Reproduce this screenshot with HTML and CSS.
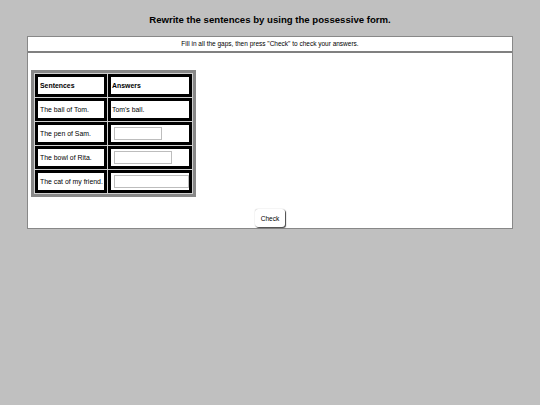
FILE: index.html
```html
<!DOCTYPE html>
<html>
<head>
<meta charset="utf-8">
<link rel="stylesheet" href="styles.css">
</head>
<body>
<div class="title">Rewrite the sentences by using the possessive form.</div>
<div class="box">
  <div class="instr">Fill in all the gaps, then press "Check" to check your answers.</div>
  <div class="content">
    <table class="ex">
      <tr><td class="c1 hd">Sentences</td><td class="c2 hd">Answers</td></tr>
      <tr><td class="c1">The ball of Tom.</td><td class="c2">Tom's ball.</td></tr>
      <tr><td class="c1">The pen of Sam.</td><td class="c2"><input class="gap w1" type="text"></td></tr>
      <tr><td class="c1">The bowl of Rita.</td><td class="c2"><input class="gap w2" type="text"></td></tr>
      <tr><td class="c1">The cat of my friend.</td><td class="c2"><input class="gap w3" type="text"></td></tr>
    </table>
    <div class="btnrow"><button class="check" type="button">Check</button></div>
  </div>
</div>
</body>
</html>
```
FILE: styles.css
```css
html, body {
  margin: 0;
  padding: 0;
  background: #c0c0c0;
  font-family: "Liberation Sans", Arial, sans-serif;
  color: #000;
}
.title {
  font-weight: bold;
  font-size: 9.6px;
  line-height: 12px;
  text-align: center;
  padding-top: 14px;
  height: 22px;
}
.box {
  box-sizing: border-box;
  width: 486px;
  margin: 0 auto;
  background: #fff;
  border: 1px solid #888;
}
.instr {
  font-size: 6.5px;
  line-height: 14px;
  height: 14px;
  text-align: center;
  border-bottom: 2px solid #808080;
}
.content {
  padding: 17px 3px 1px 3px;
}
.ex {
  border: 3px solid #888;
  border-spacing: 1px;
  background: #cfcfcf;
}
.ex td {
  background: #fff;
  border: 3px solid #000;
  height: 17px;
  padding: 0 1px 0 2px;
  font-size: 6.9px;
  white-space: nowrap;
  vertical-align: middle;
  box-sizing: content-box;
}
.ex td.c1 { width: 63px; }
.ex td.c2 { width: 77px; padding-left: 1px; padding-right: 0; }
.ex td.hd { font-weight: bold; font-size: 6.9px; }
.gap {
  display: block;
  box-sizing: border-box;
  height: 13px;
  margin: 0 0 0 2px;
  padding: 0 2px;
  border: 1px solid #bdbdbd;
  font-size: 7px;
  background: #fff;
}
.w1 { width: 48px; }
.w2 { width: 58px; }
.w3 { width: 75px; }
.btnrow {
  display: flex;
  justify-content: center;
  margin-top: 12px;
}
.check {
  width: 30px;
  height: 18px;
  padding: 0;
  font-family: "Liberation Sans", Arial, sans-serif;
  font-size: 6.5px;
  background: #fff;
  border: none;
  border-radius: 3px;
  box-shadow: 1px 1px 1px 0 #444, 0 0 1px #999;
  color: #000;
}
```
